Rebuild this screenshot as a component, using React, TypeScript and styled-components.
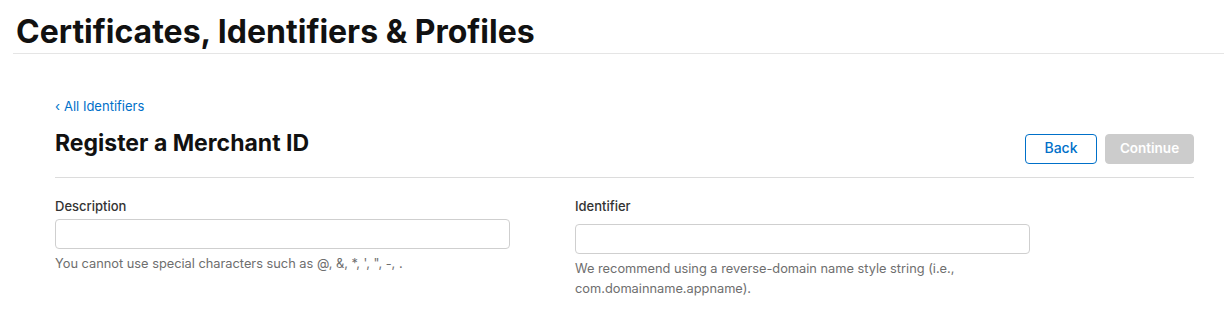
import React from "react";
import styled, { createGlobalStyle } from "styled-components";

const Global = createGlobalStyle`
  html, body { margin: 0; padding: 0; background: #fff; }
  body { font-family: Inter, "Noto Sans", sans-serif; color: #111; -webkit-font-smoothing: antialiased; }
  * { box-sizing: border-box; }
`;

const Page = styled.div`
  width: 1224px;
  display: flex;
  flex-direction: column;
`;

const Header = styled.header`
  margin-left: 13px;
  padding: 13px 0 0 3px;
  height: 54px;
  border-bottom: 1px solid #e5e5e5;
`;

const SiteTitle = styled.h1`
  margin: 0;
  font-size: 32px;
  line-height: 38px;
  font-weight: 700;
  letter-spacing: 0;
  color: #111;
`;

const Main = styled.main`
  padding: 43px 30px 0 55px;
  display: flex;
  flex-direction: column;
`;

const BackLink = styled.a`
  font-size: 13px;
  line-height: 18px;
  color: #0070c9;
  text-decoration: none;
  display: inline-flex;
  align-items: center;
  gap: 4px;
  align-self: flex-start;
`;

const TitleBar = styled.div`
  display: flex;
  justify-content: space-between;
  align-items: flex-start;
  margin-top: 7px;
  padding-bottom: 13px;
  border-bottom: 1px solid #dcdcdc;
`;

const PageTitle = styled.h2`
  margin: 7px 0 0;
  font-size: 23px;
  line-height: 28px;
  font-weight: 700;
  letter-spacing: 0;
  color: #111;
`;

const Actions = styled.div`
  display: flex;
  gap: 8px;
  margin-top: 12px;
`;

const Button = styled.button<{ $primary?: boolean }>`
  height: 30px;
  padding: 0 0 3px;
  width: ${(p) => (p.$primary ? "89px" : "72px")};
  border-radius: 4px;
  font-family: inherit;
  font-size: ${(p) => (p.$primary ? "13.5px" : "14px")};
  font-weight: ${(p) => (p.$primary ? 600 : 500)};
  border: 1px solid ${(p) => (p.$primary ? "#cccccc" : "#0070c9")};
  background: ${(p) => (p.$primary ? "#cccccc" : "#fff")};
  color: ${(p) => (p.$primary ? "#fff" : "#0070c9")};
`;

const Fields = styled.div`
  display: grid;
  grid-template-columns: 455px 455px;
  column-gap: 65px;
  margin-top: 19px;
`;

const Field = styled.div<{ $offset?: number }>`
  display: flex;
  flex-direction: column;
  label + input { margin-top: ${(p) => 4 + (p.$offset || 0)}px; }
`;

const Label = styled.label`
  font-size: 13px;
  line-height: 18px;
  font-weight: 500;
  color: #333;
`;

const Input = styled.input`
  height: 30px;
  border: 1px solid #cfcfcf;
  border-radius: 4px;
  font-family: inherit;
  font-size: 13px;
  padding: 0 8px;
`;

const Help = styled.p`
  margin: 5px 0 0;
  font-size: 12.8px;
  line-height: 20px;
  color: #6e6e6e;
`;

export default function App() {
  return (
    <Page>
      <Global />
      <Header>
        <SiteTitle>Certificates, Identifiers &amp; Profiles</SiteTitle>
      </Header>
      <Main>
        <BackLink href="#">
          <span>‹</span>All Identifiers
        </BackLink>
        <TitleBar>
          <PageTitle>Register a Merchant ID</PageTitle>
          <Actions>
            <Button>Back</Button>
            <Button $primary disabled>Continue</Button>
          </Actions>
        </TitleBar>
        <Fields>
          <Field>
            <Label>Description</Label>
            <Input />
            <Help>You cannot use special characters such as @, &amp;, *, ', ", -, .</Help>
          </Field>
          <Field $offset={5}>
            <Label>Identifier</Label>
            <Input />
            <Help>
              We recommend using a reverse-domain name style string (i.e.,
              <br />
              com.domainname.appname).
            </Help>
          </Field>
        </Fields>
      </Main>
    </Page>
  );
}
